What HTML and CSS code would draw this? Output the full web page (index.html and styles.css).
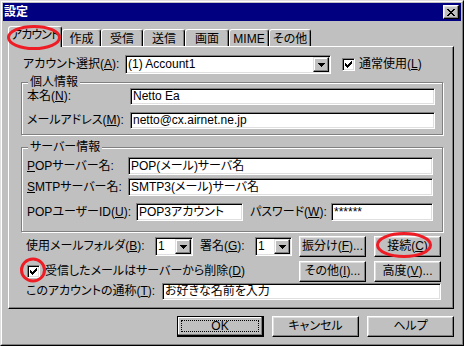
FILE: index.html
```html
<!DOCTYPE html>
<html>
  <head>
    <meta charset="UTF-8">
    <link rel="stylesheet" href="styles.css">
    <title>設定</title>
  </head>
  <body>
    <div class="window">
      <div class="frame">
        <div class="titlebar">
          <span class="title">設定</span>
          <span class="close">
            <svg width="8" height="7" viewBox="0 0 8 7" shape-rendering="crispEdges"><path d="M0 0h2v1h-2zM6 0h2v1h-2zM1 1h2v1h-2zM5 1h2v1h-2zM2 2h4v1h-4zM3 3h2v1h-2zM2 4h4v1h-4zM1 5h2v1h-2zM5 5h2v1h-2zM0 6h2v1h-2zM6 6h2v1h-2z" fill="#000"/></svg>
          </span>
        </div>

        <div class="tabs">
          <div class="tab active t-account">アカウント</div>
          <div class="tab t-create">作成</div>
          <div class="tab t-recv">受信</div>
          <div class="tab t-send">送信</div>
          <div class="tab t-screen">画面</div>
          <div class="tab t-mime">MIME</div>
          <div class="tab t-other">その他</div>
        </div>

        <div class="panel">
          <div class="row">
            <label class="lbl lbl-account">アカウント選択(<u>A</u>):</label>
            <div class="field combo">
              <span>(1) Account1</span>
              <span class="drop"><svg width="7" height="4" viewBox="0 0 7 4" shape-rendering="crispEdges"><path d="M0 0h7v1h-1v1h-1v1h-1v1h-1v-1h-1v-1h-1v-1h-1z" fill="#000"/></svg></span>
            </div>
            <span class="check check-usual"><svg width="7" height="7" viewBox="0 0 7 7" shape-rendering="crispEdges"><path d="M6 0h1v3h-1zM5 1h1v3h-1zM4 2h1v3h-1zM3 3h1v3h-1zM2 4h1v3h-1zM1 3h1v3h-1zM0 2h1v3h-1z" fill="#000"/></svg></span>
            <label class="check-text">通常使用(<u>L</u>)</label>
          </div>

          <div class="group personal">
            <div class="group-title">個人情報</div>
            <div class="row row-name">
              <label class="lbl lbl-name">本名(<u>N</u>):</label>
              <div class="field text">Netto Ea</div>
            </div>
            <div class="row row-mail">
              <label class="lbl lbl-name">メールアドレス(<u>M</u>):</label>
              <div class="field text">netto@cx.airnet.ne.jp</div>
            </div>
          </div>

          <div class="group server">
            <div class="group-title">サーバー情報</div>
            <div class="row row-pop">
              <label class="lbl lbl-server"><u>P</u>OPサーバー名:</label>
              <div class="field text tall">POP(メール)サーバ名</div>
            </div>
            <div class="row row-smtp">
              <label class="lbl lbl-server"><u>S</u>MTPサーバー名:</label>
              <div class="field text tall">SMTP3(メール)サーバ名</div>
            </div>
            <div class="row row-user">
              <label class="lbl lbl-user">POPユーザーID(<u>U</u>):</label>
              <div class="field tall user">POP3アカウント</div>
              <label class="lbl lbl-pass">パスワード(<u>W</u>):</label>
              <div class="field text tall">******</div>
            </div>
          </div>

          <div class="row row-folder">
            <label class="lbl lbl-folder">使用メールフォルダ(<u>B</u>):</label>
            <div class="field combo small folder">
              <span>1</span>
              <span class="drop"><svg width="7" height="4" viewBox="0 0 7 4" shape-rendering="crispEdges"><path d="M0 0h7v1h-1v1h-1v1h-1v1h-1v-1h-1v-1h-1v-1h-1z" fill="#000"/></svg></span>
            </div>
            <label class="lbl lbl-sig">署名(<u>G</u>):</label>
            <div class="field combo small sig">
              <span>1</span>
              <span class="drop"><svg width="7" height="4" viewBox="0 0 7 4" shape-rendering="crispEdges"><path d="M0 0h7v1h-1v1h-1v1h-1v1h-1v-1h-1v-1h-1v-1h-1z" fill="#000"/></svg></span>
            </div>
            <button class="btn side first">振分け(<u>F</u>)...</button>
            <button class="btn side">接続(<u>C</u>)</button>
          </div>

          <div class="row row-delete">
            <span class="check check-delete"><svg width="7" height="7" viewBox="0 0 7 7" shape-rendering="crispEdges"><path d="M6 0h1v3h-1zM5 1h1v3h-1zM4 2h1v3h-1zM3 3h1v3h-1zM2 4h1v3h-1zM1 3h1v3h-1zM0 2h1v3h-1z" fill="#000"/></svg></span>
            <label class="check-text">受信したメールはサーバーから削除(<u>D</u>)</label>
            <button class="btn side push">その他(<u>I</u>)...</button>
            <button class="btn side">高度(<u>V</u>)...</button>
          </div>

          <div class="row row-alias">
            <label class="lbl lbl-alias">このアカウントの通称(<u>T</u>):</label>
            <div class="field text">お好きな名前を入力</div>
          </div>
        </div>

        <div class="actions">
          <button class="btn wide default"><span class="focus">OK</span></button>
          <button class="btn wide">キャンセル</button>
          <button class="btn wide">ヘルプ</button>
        </div>
      </div>
    </div>

    <svg class="marks" width="464" height="346" viewBox="0 0 464 346">
      <ellipse cx="34" cy="37.5" rx="25.5" ry="11" fill="none" stroke="#ee1c24" stroke-width="3"/>
      <ellipse cx="33" cy="270" rx="11.5" ry="11" fill="none" stroke="#ee1c24" stroke-width="3"/>
      <ellipse cx="404" cy="245" rx="26.5" ry="11.5" fill="none" stroke="#ee1c24" stroke-width="3"/>
    </svg>
  </body>
</html>
```

FILE: styles.css
```css
body {
  margin: 0;
  padding: 0;
  position: relative;
  background-color: #c0c0c0;
  color: #000;
  font-family: "Liberation Sans", "Noto Sans CJK JP", sans-serif;
  font-size: 12px;
  font-feature-settings: "palt";
  line-height: 13px
}

.window {
  width: 464px;
  height: 346px;
  box-sizing: border-box;
  border: 1px solid;
  border-color: #dfdfdf #000 #000 #dfdfdf;
  background-color: #c0c0c0
}

.frame {
  height: 100%;
  box-sizing: border-box;
  border: 1px solid;
  border-color: #fff #808080 #808080 #fff;
  padding: 1px
}

.titlebar {
  height: 18px;
  background-color: #000080;
  color: #fff;
  display: flex;
  align-items: center;
  justify-content: space-between;
  padding: 0 2px 0 1px
}

.title {
  font-weight: 700
}

.close {
  width: 16px;
  height: 14px;
  box-sizing: border-box;
  border: 1px solid;
  border-color: #fff #000 #000 #fff;
  box-shadow: inset -1px -1px #808080, inset 1px 1px #dfdfdf;
  background-color: #c0c0c0;
  display: flex;
  align-items: center;
  justify-content: center
}

/* tab strip */
.tabs {
  display: flex;
  align-items: flex-end;
  height: 21px;
  margin: 5px 0 0 5px;
  position: relative;
  z-index: 1
}

.tab {
  height: 17px;
  margin-bottom: 1px;
  padding-top: 2px;
  box-sizing: border-box;
  border: 1px solid;
  border-bottom: none;
  border-color: #fff #000 transparent #fff;
  border-radius: 3px 3px 0 0;
  box-shadow: inset -1px 0 #808080;
  background-color: #c0c0c0;
  display: flex;
  align-items: center;
  justify-content: center;
  white-space: nowrap;
  flex: none
}

.tab.active {
  height: 21px;
  margin-bottom: 0;
  padding: 0 0 3px;
  letter-spacing: -1px
}

.t-account { width: 54px }
.t-create { width: 39px }
.t-recv { width: 42px }
.t-send { width: 42px }
.t-screen { width: 44px }
.t-mime { width: 40px }
.t-other { width: 42px }

/* page */
.panel {
  width: 446px;
  margin: -1px 0 0 5px;
  box-sizing: border-box;
  border: 1px solid;
  border-color: #fff #000 #000 #fff;
  box-shadow: inset -1px -1px #808080;
  padding: 8px 10px 8px 12px
}

.row {
  display: flex;
  align-items: center
}

label {
  white-space: nowrap
}

.lbl {
  flex: none
}

.lbl-account { width: 102px; margin-left: 2px }
.lbl-name { width: 103px }
.lbl-server { width: 101px }
.lbl-user { width: 109px }
.lbl-pass { width: 81px; margin-left: 7px }
.lbl-folder { width: 129px }
.lbl-sig { width: 55px; margin-left: 7px }
.lbl-alias { width: 136px }

.field {
  height: 17px;
  box-sizing: border-box;
  background-color: #fff;
  border: 1px solid;
  border-color: #808080 #fff #fff #808080;
  box-shadow: inset 1px 1px #000, inset -1px -1px #dfdfdf;
  padding: 0 2px;
  display: flex;
  align-items: center;
  white-space: nowrap;
  overflow: hidden
}

.field.text {
  flex: 1
}

.field.tall {
  height: 18px
}

.field.user {
  width: 107px
}

.combo {
  height: 19px;
  width: 206px;
  padding: 1px 1px 1px 2px
}

.combo.small.folder { width: 38px }
.combo.small.sig { width: 37px }

.drop {
  width: 16px;
  height: 15px;
  margin-left: auto;
  flex: none;
  box-sizing: border-box;
  border: 1px solid;
  border-color: #dfdfdf #000 #000 #dfdfdf;
  box-shadow: inset -1px -1px #808080, inset 1px 1px #fff;
  background-color: #c0c0c0;
  display: flex;
  align-items: center;
  justify-content: center
}

.check {
  width: 13px;
  height: 13px;
  flex: none;
  box-sizing: border-box;
  background-color: #fff;
  border: 1px solid;
  border-color: #808080 #fff #fff #808080;
  box-shadow: inset 1px 1px #000, inset -1px -1px #dfdfdf;
  display: flex;
  align-items: center;
  justify-content: center
}

.check-usual { margin-left: 11px }
.check-delete { margin-left: 1px }

.check-text {
  margin-left: 4px
}

.row-delete .check-text {
  margin-left: 5px
}

/* group boxes */
.group {
  border: 1px solid #808080;
  box-shadow: inset 1px 1px #fff, 1px 1px #fff
}

.group.personal {
  margin-top: 8px;
  padding: 0 7px 5px 5px
}

.group.server {
  margin-top: 12px;
  padding: 0 9px 10px 5px
}

.group-title {
  width: fit-content;
  margin: -7px 0 -6px 1px;
  padding: 0 2px;
  background-color: #c0c0c0
}

.row-name { margin-top: 5px }
.row-mail { margin-top: 7px }
.row-pop { margin-top: 9px }
.row-smtp { margin-top: 3px }
.row-user { margin-top: 7px }

.row-folder {
  margin: 4px 2px 0 0;
  padding-left: 5px
}

.row-delete {
  margin: 4px 2px 0 0;
  padding-left: 5px
}

.row-alias {
  margin: 1px 2px 0 0;
  padding-left: 5px
}

/* buttons */
.btn {
  height: 21px;
  box-sizing: border-box;
  border: 1px solid;
  border-color: #fff #000 #000 #fff;
  box-shadow: inset -1px -1px #808080, inset 1px 1px #dfdfdf;
  background-color: #c0c0c0;
  color: #000;
  font: inherit;
  padding: 0;
  display: flex;
  align-items: center;
  justify-content: center;
  white-space: nowrap
}

.btn.side {
  width: 67px;
  margin-left: 8px;
  flex: none
}

.btn.side.first {
  margin-left: 7px
}

.btn.side.push {
  margin-left: auto
}

.actions {
  display: flex;
  justify-content: flex-end;
  gap: 8px;
  margin: 7px 7px 0 0
}

.btn.wide {
  width: 87px
}

.btn.default {
  border-color: #000;
  box-shadow: inset -1px -1px #000, inset -2px -2px #808080, inset 1px 1px #fff;
  padding: 3px 4px 4px 3px
}

.focus {
  flex: 1;
  align-self: stretch;
  border: 1px dotted #000;
  display: flex;
  align-items: center;
  justify-content: center
}

.marks {
  position: absolute;
  left: 0;
  top: 0;
  z-index: 2;
  pointer-events: none
}
```
